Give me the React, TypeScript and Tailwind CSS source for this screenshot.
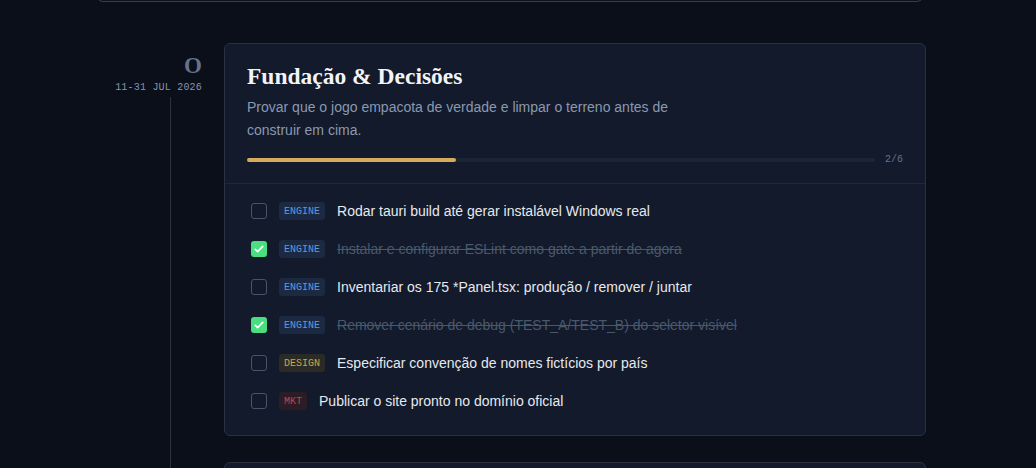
import React from "react";

type Tag = "ENGINE" | "DESIGN" | "MKT";

type Task = { tag: Tag; text: string; done: boolean };

const tasks: Task[] = [
  { tag: "ENGINE", text: "Rodar tauri build até gerar instalável Windows real", done: false },
  { tag: "ENGINE", text: "Instalar e configurar ESLint como gate a partir de agora", done: true },
  { tag: "ENGINE", text: "Inventariar os 175 *Panel.tsx: produção / remover / juntar", done: false },
  { tag: "ENGINE", text: "Remover cenário de debug (TEST_A/TEST_B) do seletor visível", done: true },
  { tag: "DESIGN", text: "Especificar convenção de nomes fictícios por país", done: false },
  { tag: "MKT", text: "Publicar o site pronto no domínio oficial", done: false },
];

const tagStyles: Record<Tag, string> = {
  ENGINE: "bg-[#1b2a42] text-[#5d9bd8]",
  DESIGN: "bg-[#2b2a25] text-[#d4a24f]",
  MKT: "bg-[#2b1c26] text-[#c4424f]",
};

const mono = { fontFamily: '"Liberation Mono", "DejaVu Sans Mono", monospace' };
const serif = { fontFamily: '"Liberation Serif", "DejaVu Serif", Georgia, serif' };

function Checkbox({ checked }: { checked: boolean }) {
  if (checked) {
    return (
      <span className="flex h-4 w-4 shrink-0 items-center justify-center rounded-[3px] bg-[#4ade80]">
        <svg viewBox="0 0 16 16" className="h-3 w-3" fill="none">
          <path d="M3 8.5l3.2 3L13 4.5" stroke="#ffffff" strokeWidth="2.2" strokeLinecap="round" strokeLinejoin="round" />
        </svg>
      </span>
    );
  }
  return <span className="h-4 w-4 shrink-0 rounded-[3px] border-[1.5px] border-[#4a5466]" />;
}

function TaskRow({ task }: { task: Task }) {
  return (
    <li className="flex h-[30px] items-center gap-3 pl-1">
      <Checkbox checked={task.done} />
      <span
        style={mono}
        className={`flex h-[18px] items-center rounded-[3px] px-[5px] text-[10px] ${tagStyles[task.tag]}`}
      >
        {task.tag}
      </span>
      <span
        className={
          task.done
            ? "text-[14px] text-[#4a586c] line-through decoration-[#4a586c]"
            : "text-[14px] text-[#e6e9ee]"
        }
      >
        {task.text}
      </span>
    </li>
  );
}

function PhaseCard() {
  const done = tasks.filter((t) => t.done).length;
  const pct = (done / tasks.length) * 100;
  return (
    <section className="rounded-md border border-[#2a3242] bg-[#121a2b]">
      <header className="border-b border-[#1f2838] px-[22px] pb-[18px] pt-[18px]">
        <h2 style={serif} className="text-[23.5px] font-bold leading-[28px] text-[#f1f3f6]">
          Fundação &amp; Decisões
        </h2>
        <p className="mt-[6px] max-w-[450px] text-[14px] leading-[23px] text-[#8a99b0]">
          Provar que o jogo empacota de verdade e limpar o terreno antes de construir em cima.
        </p>
        <div className="mt-[13px] flex items-center gap-[10px]">
          <div className="h-1 flex-1 rounded-full bg-[#1b2536]">
            <div className="h-1 rounded-full bg-[#d6ab5c]" style={{ width: `${pct}%` }} />
          </div>
          <span style={mono} className="text-[10px] leading-none text-[#64748b]">
            {done}/{tasks.length}
          </span>
        </div>
      </header>
      <ul className="flex flex-col gap-2 px-[22px] pb-[19px] pt-3">
        {tasks.map((t, i) => (
          <TaskRow key={i} task={t} />
        ))}
      </ul>
    </section>
  );
}

function TimelineMarker({ glyph, dates }: { glyph?: string; dates?: string }) {
  return (
    <div className="relative pr-[22px] text-right">
      <span className="absolute bottom-0 left-[72px] top-[54px] w-px bg-[#2a3140]" />
      {glyph && (
        <div style={serif} className="mt-[9px] text-[23px] font-bold leading-[28px] text-[#65728a]">
          {glyph}
        </div>
      )}
      {dates && (
        <div style={mono} className="mt-[2px] text-[10px] leading-[12px] tracking-[0.2px] text-[#8a94a6]">
          {dates}
        </div>
      )}
    </div>
  );
}

export default function App() {
  return (
    <div
      className="min-h-[468px] overflow-hidden bg-[#0a0f1a] text-white"
      style={{ fontFamily: '"Liberation Sans", Arial, sans-serif' }}
    >
      <div className="ml-[98px] mr-[112px]">
        {/* bottom edge of the roadmap header above */}
        <div className="-mt-[7px] mr-[2px] h-[9px] rounded-md border border-[#393e46] bg-[#0d1220]" />

        <div className="mt-[41px] grid grid-cols-[126px_1fr]">
          <TimelineMarker glyph="O" dates="11-31 JUL 2026" />
          <div className="mr-[-2px]">
            <PhaseCard />
          </div>

          <div className="relative h-[26px]">
            <span className="absolute bottom-0 left-[72px] top-0 w-px bg-[#2a3140]" />
          </div>
          <div />

          <div className="relative">
            <span className="absolute bottom-0 left-[72px] top-0 w-px bg-[#2a3140]" />
          </div>
          <div className="mr-[-2px]">
            <section className="h-[200px] rounded-md border border-[#2a3242] bg-[#121a2b]" />
          </div>
        </div>
      </div>
    </div>
  );
}
